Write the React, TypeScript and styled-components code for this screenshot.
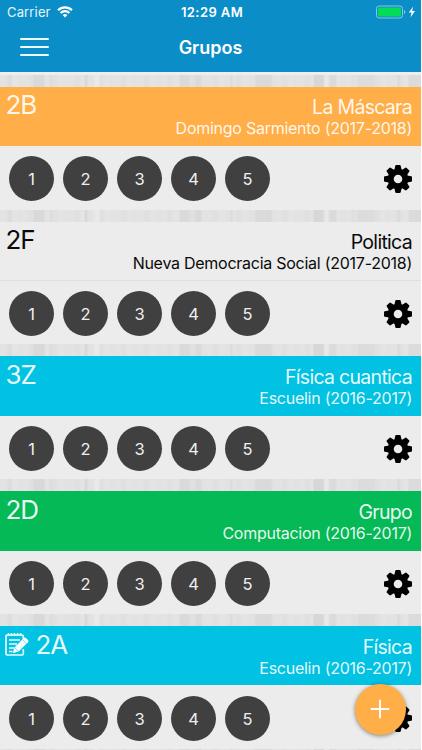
import React from "react";
import styled, { createGlobalStyle } from "styled-components";

const GlobalStyle = createGlobalStyle`
  * { box-sizing: border-box; }
  html, body, #root { height: 100%; margin: 0; }
  body {
    overflow: hidden;
    background: #fff;
    font-family: Inter, "Liberation Sans", sans-serif;
  }
`;

const Screen = styled.div`
  position: relative;
  width: 421px;
  height: 750px;
  overflow: hidden;
  display: flex;
  flex-direction: column;
  background-color: #e2e2e2;
  background-image:
    linear-gradient(90deg, transparent 0 8px, #dcdcdc 9px 11px, transparent 12px 33px, #d9d9d9 34px 44px, transparent 45px 49px, #dddddd 50px 52px, transparent 53px 84px, #d9d9d9 85px 87px, transparent 88px 94px, #e9e9e9 95px 99px, transparent 100px 179px, #dadada 180px 189px, #e0e0e0 190px 195px, #dadada 196px 201px, transparent 202px 230px, #dbdbdb 231px 232px, transparent 233px 254px, #dadada 256px 271px, transparent 273px 313px, #d7d7d7 314px 323px, #e8e8e8 325px 328px, #dbdbdb 330px 336px, transparent 337px 357px, #dcdcdc 358px 374px, transparent 375px 397px, #dadada 398px 399px, transparent 400px 408px, #dbdbdb 409px 421px),
    repeating-linear-gradient(90deg, #e3e3e3 0 5px, #e0e0e0 7px 10px, #e4e4e4 13px 17px, #e2e2e2 19px 23px);
`;

const TopBar = styled.header`
  flex: none;
  height: 75px;
  background: #0b8dc8;
  border-bottom: 3px solid #eeeeee;
  color: #fff;
`;

const Columns = styled.div<{ $height: number }>`
  display: grid;
  grid-template-columns: 1fr auto 1fr;
  align-items: center;
  height: ${(p) => p.$height}px;
`;

const Carrier = styled.div`
  display: flex;
  align-items: center;
  gap: 6px;
  padding-left: 7px;
  font-size: 13px;
  letter-spacing: 0.15px;
  color: #e6f7ff;
`;

const Clock = styled.div`
  font-size: 13px;
  font-weight: 600;
  letter-spacing: 0.4px;
  padding-left: 3px;
`;

const Power = styled.div`
  display: flex;
  justify-content: flex-end;
  padding-right: 5px;
`;

const MenuButton = styled.button`
  display: flex;
  flex-direction: column;
  justify-content: space-between;
  width: 29px;
  height: 18px;
  margin: 0 0 2px 20px;
  padding: 0;
  border: 0;
  background: none;
`;

const MenuLine = styled.span`
  height: 2px;
  border-radius: 1px;
  background: #edfaff;
`;

const Title = styled.h1`
  margin: 0;
  font-size: 18px;
  font-weight: 600;
  line-height: 24px;
`;

const GroupList = styled.main`
  display: flex;
  flex-direction: column;
  gap: 12px;
  padding-top: 11.7px;
`;

const Card = styled.section`
  flex: none;
  height: 122.85px;
`;

const CardHead = styled.div<{ $bg: string; $dark?: boolean }>`
  display: flex;
  justify-content: space-between;
  height: 59.4px;
  padding: 0 9px 0 5.5px;
  background: ${(p) => p.$bg};
  color: ${(p) => (p.$dark ? "#0a0a0a" : "rgba(255, 255, 255, 0.92)")};
  border-bottom: ${(p) => (p.$dark ? "1px solid #dfdfdf" : "0")};
`;

const Code = styled.div`
  display: flex;
  align-items: flex-start;
  gap: 5px;
  padding-top: 0.5px;
  font-size: 26px;
  line-height: 36px;
  letter-spacing: -1px;
`;

const Names = styled.div`
  padding-top: 9.5px;
  text-align: right;
  white-space: nowrap;
`;

const Subject = styled.div`
  font-size: 19.5px;
  line-height: 23px;
  letter-spacing: -0.7px;
`;

const School = styled.div`
  font-size: 16px;
  line-height: 19px;
  letter-spacing: -0.26px;
`;

const CardBody = styled.div`
  display: flex;
  align-items: center;
  gap: 9px;
  height: 63.45px;
  padding: 2px 9px 0;
  background: #ececec;
`;

const Period = styled.button`
  width: 45px;
  height: 45px;
  padding: 0;
  border: 0;
  border-radius: 50%;
  background: #404040;
  color: #efefef;
  font: 400 16.5px/46px Inter, "Liberation Sans", sans-serif;
`;

const Settings = styled.button`
  width: 28px;
  height: 28px;
  margin: 0.6px 0 0 auto;
  padding: 0;
  border: 0;
  background: none;
`;

const AddButton = styled.button`
  position: absolute;
  left: 354.5px;
  top: 683.5px;
  display: grid;
  place-items: center;
  width: 51px;
  height: 51px;
  padding: 0;
  border: 0;
  border-radius: 50%;
  background: #ffae48;
  box-shadow: 0 1px 4px rgba(0, 0, 0, 0.45);
`;

const Block = styled.svg`
  display: block;
`;

const NoteIcon = styled(Block)`
  margin: 5px 1px 0 -1px;
`;

const Wifi = () => (
  <Block width="16" height="12" viewBox="0 0 16 12" fill="none" stroke="#fff" strokeWidth="2.1">
    <path d="M1 4.2a10 10 0 0 1 14 0" />
    <path d="M3.6 7a6.2 6.2 0 0 1 8.8 0" />
    <path d="M8 11.5 5.6 9.1a3.4 3.4 0 0 1 4.8 0Z" fill="#fff" stroke="none" />
  </Block>
);

const Battery = () => (
  <Block width="41" height="14" viewBox="0 0 41 14">
    <rect x="1.5" y="1" width="26" height="12" rx="2.6" fill="none" stroke="#86c8e5" />
    <rect x="3" y="2.6" width="23" height="8.8" rx="1.2" fill="#04db59" />
    <path d="M29 5v4c1.8-.5 1.8-3.5 0-4Z" fill="#86c8e5" />
    <path d="m38.2 1.4-4.4 6.2h2.8l-1.2 5 4.6-6.7h-2.9Z" fill="#fff" />
  </Block>
);

const Gear = () => (
  <Block width="28" height="28" viewBox="-14 -14 28 28">
    <circle r="7.3" fill="none" stroke="#000" strokeWidth="6" />
    {[0, 45, 90, 135, 180, 225, 270, 315].map((a) => (
      <path
        key={a}
        transform={`rotate(${a})`}
        d="M-3.6-9-2.7-13.2Q-2.5-14-1.7-14H1.7Q2.5-14 2.7-13.2L3.6-9Z"
      />
    ))}
  </Block>
);

const Note = () => (
  <NoteIcon width="25" height="25" viewBox="0 0 25 25" fill="none" stroke="#e9faff">
    <path d="M18.3 8V4.2Q18.3 3 17 3H2.2Q1 3 1 4.2v17.6Q1 23 2.2 23H17q1.3 0 1.3-1.2V17" strokeWidth="1.7" />
    <path d="M3.5 1v3M6.5 1v3M9.5 1v3M12.5 1v3M15.5 1v3" strokeWidth="1.5" />
    <path d="M4 8h11M4 12h8M4 16h5M4 19.5h3.5" strokeWidth="1.4" />
    <path d="m9.3 15.5 9.5-9.4q1.1-1 2.2 0l2 2q1 1.1 0 2.1l-9.3 9.2-5.9 1.8Z" fill="#f5fdff" stroke="none" />
    <path d="m17.4 7.5 4.1 4.1M9.3 15.5l4.3 4" stroke="#02c2e3" strokeWidth=".5" />
  </NoteIcon>
);

interface Group {
  code: string;
  subject: string;
  school: string;
  color: string;
  dark?: boolean;
  note?: boolean;
}

const groups: Group[] = [
  { code: "2B", subject: "La Máscara", school: "Domingo Sarmiento (2017-2018)", color: "#ffae48" },
  { code: "2F", subject: "Politica", school: "Nueva Democracia Social (2017-2018)", color: "#ececec", dark: true },
  { code: "3Z", subject: "Física cuantica", school: "Escuelin (2016-2017)", color: "#02c2e3" },
  { code: "2D", subject: "Grupo", school: "Computacion (2016-2017)", color: "#05b957" },
  { code: "2A", subject: "Física", school: "Escuelin (2016-2017)", color: "#02c2e3", note: true },
];

export default function App() {
  return (
    <>
      <GlobalStyle />
      <Screen>
        <TopBar>
          <Columns $height={24}>
            <Carrier>Carrier <Wifi /></Carrier>
            <Clock>12:29 AM</Clock>
            <Power><Battery /></Power>
          </Columns>
          <Columns $height={48}>
            <MenuButton aria-label="Menu"><MenuLine /><MenuLine /><MenuLine /></MenuButton>
            <Title>Grupos</Title>
          </Columns>
        </TopBar>
        <GroupList>
          {groups.map((g) => (
            <Card key={g.code}>
              <CardHead $bg={g.color} $dark={g.dark}>
                <Code>{g.note && <Note />}{g.code}</Code>
                <Names>
                  <Subject>{g.subject}</Subject>
                  <School>{g.school}</School>
                </Names>
              </CardHead>
              <CardBody>
                {[1, 2, 3, 4, 5].map((n) => <Period key={n}>{n}</Period>)}
                <Settings aria-label="Settings"><Gear /></Settings>
              </CardBody>
            </Card>
          ))}
        </GroupList>
        <AddButton aria-label="Add">
          <Block width="20" height="20" viewBox="0 0 20 20" stroke="#fff" strokeWidth="2">
            <path d="M10 .8v18.4M.8 10h18.4" />
          </Block>
        </AddButton>
      </Screen>
    </>
  );
}
